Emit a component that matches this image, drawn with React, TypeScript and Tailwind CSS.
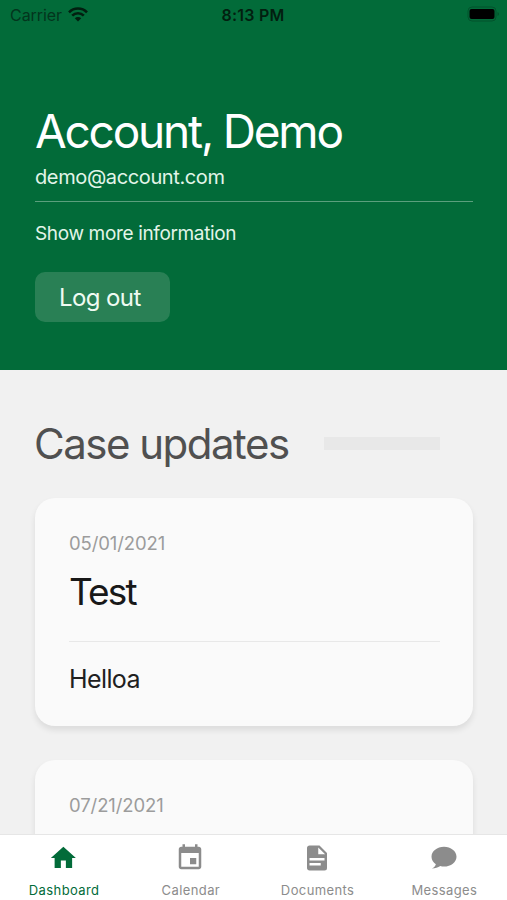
import type { ReactNode } from 'react'

type CaseUpdate = {
  date: string
  title: string
  body: string
}

const updates: CaseUpdate[] = [
  { date: '05/01/2021', title: 'Test', body: 'Helloa' },
  { date: '07/21/2021', title: '', body: '' },
]

const tabs = [
  {
    label: 'Dashboard',
    icon: <path d="M10.300 20v-6h4v6h5v-8h3l-10-9-10 9h3v8z" />,
  },
  {
    label: 'Calendar',
    icon: (
      <path d="M17 12h-5v5h5v-5zM16 1v2H8V1H6v2H5c-1.11 0-1.99.9-1.99 2L3 19c0 1.1.89 2 2 2h14c1.1 0 2-.9 2-2V5c0-1.1-.9-2-2-2h-1V1h-2zm3 18H5V8h14v11z" />
    ),
  },
  {
    label: 'Documents',
    icon: (
      <path d="M13 9h5.5L13 3.5V9M6 2h8l6 6v12a2 2 0 0 1-2 2H6c-1.11 0-2-.9-2-2V4c0-1.11.89-2 2-2m9 16v-2H6v2h9m3-4v-2H6v2h12z" />
    ),
  },
  {
    label: 'Messages',
    icon: (
      <path d="M12 3C6.500 3 2 6.500 2 10.900c0 2.500 1.400 4.600 3.500 6-.4 1.400-1.500 2.600-3.200 3.400 2.700-.1 4.900-.8 6.700-1.900 1 .3 2 .4 3 .4 5.500 0 10-3.500 10-7.900S17.500 3 12 3z" />
    ),
  },
]

export default function App() {
  return (
    <div className="flex h-[900px] w-[507px] flex-col overflow-hidden bg-[#f1f1f1] font-['Inter',sans-serif]">
      <header className="h-[370px] shrink-0 bg-[#026b39]">
        <StatusBar />
        <div className="pt-[73px] pr-[34px] pl-[35px] text-white">
          <h1 className="h-14 text-[46px] leading-14 font-normal tracking-[-2.2px] whitespace-nowrap">
            Account, Demo
          </h1>
          <p className="h-[43px] border-b border-[#5b9f7d] pt-[3px] text-[20px] leading-[30px] tracking-[-0.38px] text-[#e3f5e9]">
            demo@account.com
          </p>
          <p className="mt-[18px] h-7 text-[19px] leading-7 tracking-[-0.35px] text-[#e3f5e9]">
            Show more information
          </p>
          <button
            type="button"
            className="mt-6 flex h-[50px] w-[135px] items-center rounded-[10px] bg-[#298055] pt-0.5 pl-6 text-[24px] tracking-[-0.6px] whitespace-nowrap text-[#effbf2]"
          >
            Log out
          </button>
        </div>
      </header>

      <main className="min-h-0 flex-1 overflow-hidden pr-[34px] pl-[35px]">
        <div className="flex h-32 items-center pt-5">
          <h2 className="-ml-px w-[290px] pb-0.5 text-[42px] font-normal tracking-[-1.5px] whitespace-nowrap text-[#505050]">
            Case updates
          </h2>
          <div className="mb-px h-[13px] w-[116px] bg-[#e8e8e8]" />
        </div>
        <div className="flex flex-col gap-[34px]">
          {updates.map((update) => (
            <UpdateCard key={update.date} update={update} />
          ))}
        </div>
      </main>

      <nav className="flex h-[66px] shrink-0 border-t border-[#e6e6e6] bg-white">
        {tabs.map((tab, index) => (
          <Tab key={tab.label} label={tab.label} isActive={index === 0}>
            {tab.icon}
          </Tab>
        ))}
      </nav>
    </div>
  )
}

function StatusBar() {
  return (
    <div className="grid h-[30px] grid-cols-3 items-center pr-[7px] pl-[10px] text-[16px] leading-[30px] text-[#021f10]">
      <div className="flex items-center gap-[6px]">
        <span className="tracking-[-0.05px] text-[#03351d]">Carrier</span>
        <svg viewBox="0 0 20 15" className="mb-px h-[15px] w-5" aria-hidden="true">
          <g fill="none" stroke="currentColor" strokeWidth="2.6">
            <path d="M1 5.300a12.700 12.700 0 0 1 18 0" />
            <path d="M4.200 8.700a8.200 8.200 0 0 1 11.600 0" />
          </g>
          <path d="M10 14.500l-3.200-3.200a4.500 4.500 0 0 1 6.400 0z" fill="currentColor" />
        </svg>
      </div>
      <span className="-ml-1 text-center font-semibold tracking-[0.2px] whitespace-nowrap">
        8:13 PM
      </span>
      <svg
        viewBox="0 0 33 16"
        className="mb-0.5 h-4 w-[33px] justify-self-end"
        aria-hidden="true"
      >
        <rect x="1" y="1" width="28" height="14" rx="4" fill="none" stroke="#02532c" />
        <rect x="2.500" y="3" width="25" height="10" rx="2" fill="#000" />
        <path d="M30.500 6v4q1.500-.5 1.500-2t-1.500-2z" fill="#02532c" />
      </svg>
    </div>
  )
}

function UpdateCard({ update }: { update: CaseUpdate }) {
  return (
    <article className="h-[228px] shrink-0 rounded-[20px] bg-[#fafafa] pt-[33px] pr-[33px] pl-[34px] shadow-[0_4px_6px_rgba(0,0,0,0.09)]">
      <time className="block h-6 text-[18.500px] leading-6 tracking-[-0.1px] text-[#9c9c9c]">
        {update.date}
      </time>
      <h3 className="mt-3 -mb-px h-[75px] border-b border-[#e8e8e8] text-[37px] leading-[50px] font-normal tracking-[-1.9px] text-[#181818]">
        {update.title}
      </h3>
      <p className="mt-[22px] text-[25px] leading-8 tracking-[-0.6px] text-[#202020]">
        {update.body}
      </p>
    </article>
  )
}

type TabProps = {
  label: string
  isActive: boolean
  children: ReactNode
}

function Tab({ label, isActive, children }: TabProps) {
  return (
    <a
      aria-current={isActive ? 'page' : undefined}
      className={[
        'flex flex-1 flex-col items-center pt-2',
        isActive ? 'text-[#026b39]' : 'text-[#8c8c8c]',
      ].join(' ')}
    >
      <svg
        viewBox="0 0 24 24"
        className="size-[34px]"
        fill="currentColor"
        aria-hidden="true"
      >
        {children}
      </svg>
      <span className="mt-[7px] ml-[1.5px] text-[13px] leading-5 tracking-[0.4px]">
        {label}
      </span>
    </a>
  )
}
